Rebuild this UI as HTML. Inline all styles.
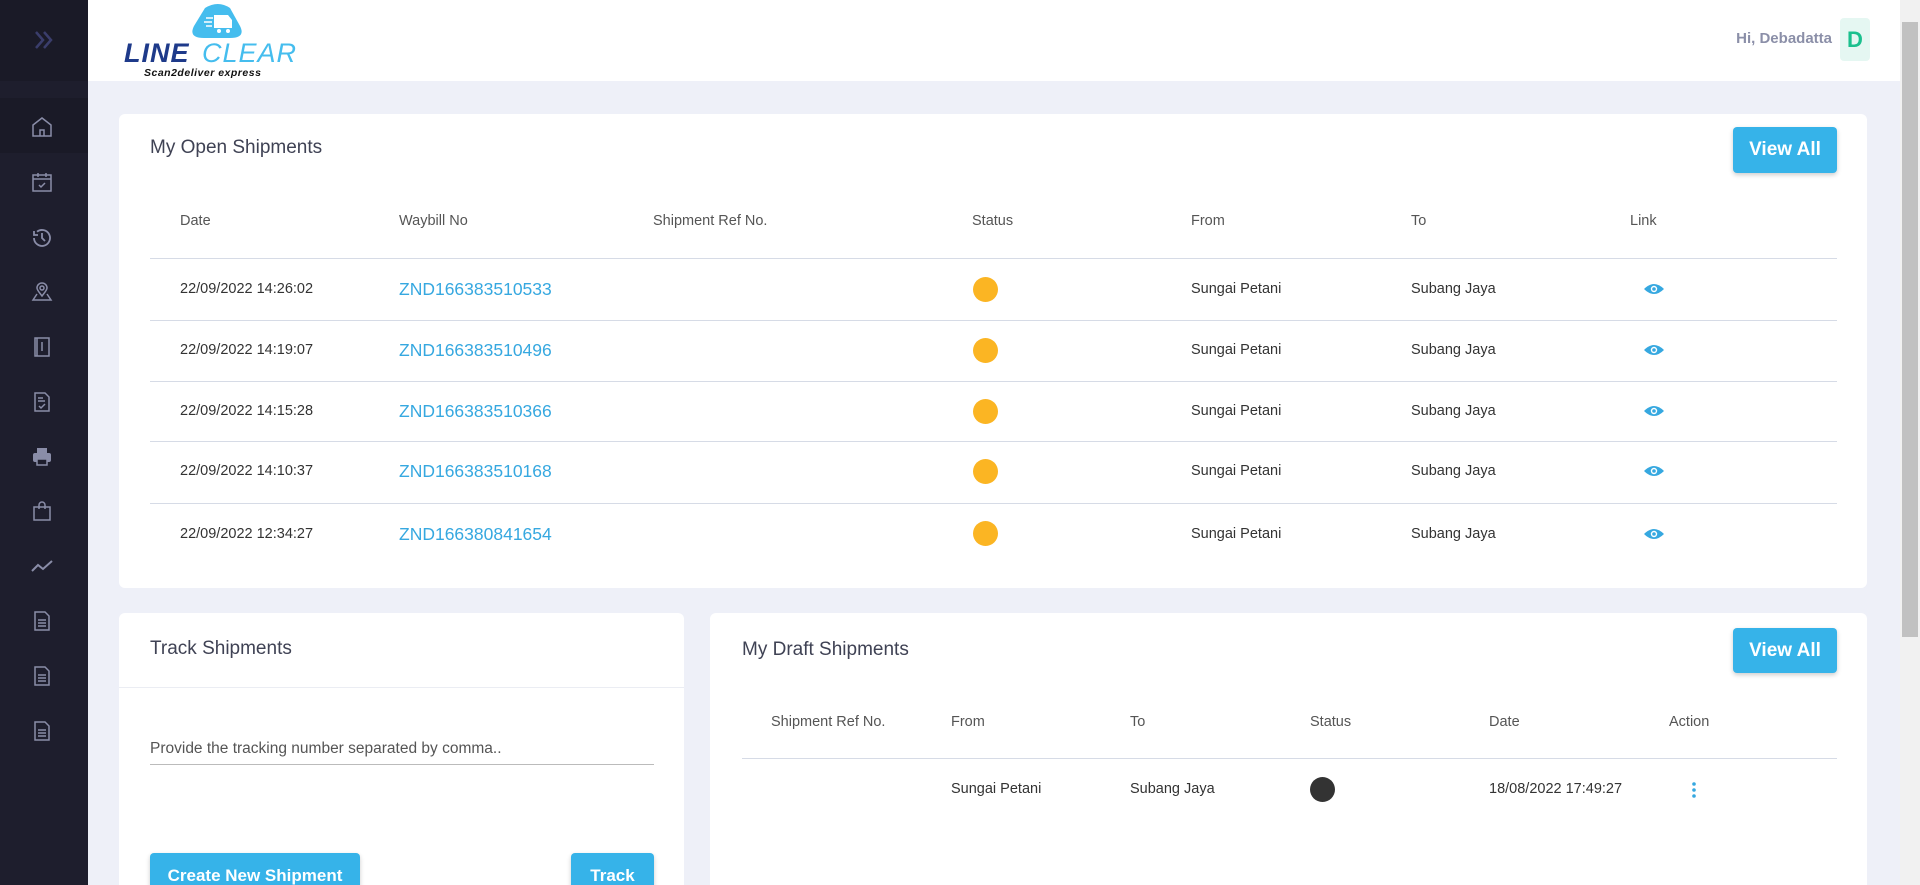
<!DOCTYPE html>
<html><head><meta charset="utf-8"><style>
*{box-sizing:border-box;margin:0;padding:0}
html,body{width:1920px;height:885px;overflow:hidden}
body{background:#eef0f8;font-family:"Liberation Sans",sans-serif;position:relative;color:#3f4254}
.abs{position:absolute}
.sb{left:0;top:0;width:88px;height:885px;background:#1e1e2d}
.sbtop{left:0;top:0;width:88px;height:81px;background:#1a1a27}
.ic{left:30px;width:24px;height:24px}
.hdr{left:88px;top:0;width:1812px;height:81px;background:#fff}
.card{background:#fff;border-radius:6px}
.t{font-size:19px;color:#3f4254}
.btn{background:#36b3e9;color:#fff;font-weight:bold;font-size:19px;border-radius:4px;text-align:center;box-shadow:0 2px 5px rgba(0,0,0,.2)}
.th{font-size:14.5px;color:#555;}
.td{font-size:14.5px;color:#333}
.wb{font-size:17.5px;color:#36a8e0}
.line{height:1px;background:#d6dbe6}
.dot{width:25px;height:25px;border-radius:50%;background:#fbb523}
</style></head><body>
<div class="abs sb"></div>
<div class="abs sbtop"></div>
<div class="abs" style="left:0;top:98px;width:88px;height:55px;background:#1a1a27"></div>
<svg class="abs" style="left:32px;top:28px" width="24" height="24" viewBox="0 0 24 24" fill="none" stroke="#3a3d6b" stroke-width="2.5"><path d="M4 4l7 8-7 8M12 4l7 8-7 8"/></svg>
<svg class="abs ic" style="top:115px" viewBox="0 0 24 24" fill="none" stroke="#8a8da8" stroke-width="1.5"><path d="M3 10l9-7 9 7v11H3z M10 21v-6h4v6"/></svg>
<svg class="abs ic" style="top:170px" viewBox="0 0 24 24" fill="none" stroke="#8a8da8" stroke-width="1.5"><rect x="3" y="5" width="18" height="16"/><path d="M3 9h18M8 3v4M16 3v4M9 15l2 2 4-4"/></svg>
<svg class="abs ic" style="top:226px" viewBox="0 0 24 24" fill="none" stroke="#8a8da8" stroke-width="1.8"><path d="M4 12a8 8 0 1 0 3-6.3M4 5v4h4M12 7v5l3 3"/></svg>
<svg class="abs ic" style="top:279px" viewBox="0 0 24 24" fill="none" stroke="#8a8da8" stroke-width="1.5"><circle cx="12" cy="9" r="2"/><path d="M12 17c-3-4-5-6-5-8a5 5 0 0 1 10 0c0 2-2 4-5 8zM7 15l-4 6h18l-4-6"/></svg>
<svg class="abs ic" style="top:335px" viewBox="0 0 24 24" fill="none" stroke="#8a8da8" stroke-width="1.5"><rect x="5" y="3" width="14" height="18"/><path d="M7 3v18M12 7v9"/></svg>
<svg class="abs ic" style="top:390px" viewBox="0 0 24 24" fill="none" stroke="#8a8da8" stroke-width="1.5"><path d="M5 3h10l4 4v14H5zM8 8h5M8 11h7M9 16l2 2 4-4"/></svg>
<svg class="abs ic" style="top:445px" viewBox="0 0 24 24" fill="#8a8da8"><rect x="7" y="3" width="10" height="5"/><rect x="3" y="8" width="18" height="9" rx="2"/><rect x="7" y="14" width="10" height="6" fill="#1e1e2d" stroke="#8a8da8" stroke-width="1.5"/></svg>
<svg class="abs ic" style="top:499px" viewBox="0 0 24 24" fill="none" stroke="#8a8da8" stroke-width="1.5"><path d="M4 8h16v13H4zM9 10V6a3 3 0 0 1 6 0v4"/></svg>
<svg class="abs ic" style="top:554px" viewBox="0 0 24 24" fill="none" stroke="#8a8da8" stroke-width="2"><path d="M2 17l6-6 5 4 9-8"/></svg>
<svg class="abs ic" style="top:609px" viewBox="0 0 24 24" fill="none" stroke="#8a8da8" stroke-width="1.5"><path d="M5 3h10l4 4v14H5zM8 11h8M8 14h8M8 17h8"/></svg>
<svg class="abs ic" style="top:664px" viewBox="0 0 24 24" fill="none" stroke="#8a8da8" stroke-width="1.5"><path d="M5 3h10l4 4v14H5zM8 11h8M8 14h8M8 17h8"/></svg>
<svg class="abs ic" style="top:719px" viewBox="0 0 24 24" fill="none" stroke="#8a8da8" stroke-width="1.5"><path d="M5 3h10l4 4v14H5zM8 11h8M8 14h8M8 17h8"/></svg>

<div class="abs hdr"></div>
<svg class="abs" style="left:120px;top:2px" width="200" height="78" viewBox="0 0 200 78">
<path d="M85 6 Q98 -2 110 6 L120 24 Q126 36 110 36 L84 36 Q68 36 74 24 Z" fill="#45bdee"/>
<path d="M86 16h7M84 20h8M86 24h6" stroke="#fff" stroke-width="1.5"/>
<path d="M94 13h14l4 5v8H94z" fill="#fff"/><circle cx="99" cy="29" r="2.5" fill="#fff" stroke="#45bdee"/><circle cx="108" cy="29" r="2.5" fill="#fff" stroke="#45bdee"/>
<text x="4" y="60" font-family="Liberation Sans" font-style="italic" font-weight="bold" font-size="27" fill="#1e3a8a" letter-spacing="1">LINE</text>
<text x="82" y="60" font-family="Liberation Sans" font-style="italic" font-size="27" fill="#45bdee" letter-spacing="1">CLEAR</text>
<text x="24" y="74" font-family="Liberation Sans" font-style="italic" font-weight="bold" font-size="10.5" fill="#111" letter-spacing="0.5">Scan2deliver express</text>
</svg>
<div class="abs" style="right:88px;top:30px;font-size:15px;font-weight:bold;color:#8b8fa8">Hi, Debadatta</div>
<div class="abs" style="left:1840px;top:18px;width:30px;height:43px;background:#e5f7f2;border-radius:4px;color:#1bc08e;font-weight:bold;font-size:22px;text-align:center;line-height:43px">D</div>
<div class="abs" style="left:1900px;top:0;width:20px;height:885px;background:#f1f1f1"></div>
<div class="abs" style="left:1902px;top:22px;width:16px;height:615px;background:#c1c1c1"></div>

<div class="abs card" style="left:119px;top:114px;width:1748px;height:474px"></div>
<div class="abs t" style="left:150px;top:137px">My Open Shipments</div>
<div class="abs btn" style="left:1733px;top:127px;width:104px;height:46px;line-height:46px">View All</div>
<div class="abs th" style="left:180px;top:213px">Date</div>
<div class="abs th" style="left:399px;top:213px">Waybill No</div>
<div class="abs th" style="left:653px;top:213px">Shipment Ref No.</div>
<div class="abs th" style="left:972px;top:213px">Status</div>
<div class="abs th" style="left:1191px;top:213px">From</div>
<div class="abs th" style="left:1411px;top:213px">To</div>
<div class="abs th" style="left:1630px;top:213px">Link</div>
<div class="abs line" style="left:150px;top:258px;width:1687px"></div>
<div class="abs line" style="left:150px;top:320px;width:1687px"></div>
<div class="abs line" style="left:150px;top:381px;width:1687px"></div>
<div class="abs line" style="left:150px;top:441px;width:1687px"></div>
<div class="abs line" style="left:150px;top:503px;width:1687px"></div>

<div class="abs td" style="left:180px;top:281px">22/09/2022 14:26:02</div><div class="abs wb" style="left:399px;top:279px">ZND166383510533</div><div class="abs dot" style="left:973px;top:277px"></div><div class="abs td" style="left:1191px;top:281px">Sungai Petani</div><div class="abs td" style="left:1411px;top:281px">Subang Jaya</div>
<div class="abs td" style="left:180px;top:342px">22/09/2022 14:19:07</div><div class="abs wb" style="left:399px;top:340px">ZND166383510496</div><div class="abs dot" style="left:973px;top:338px"></div><div class="abs td" style="left:1191px;top:342px">Sungai Petani</div><div class="abs td" style="left:1411px;top:342px">Subang Jaya</div>
<div class="abs td" style="left:180px;top:403px">22/09/2022 14:15:28</div><div class="abs wb" style="left:399px;top:401px">ZND166383510366</div><div class="abs dot" style="left:973px;top:399px"></div><div class="abs td" style="left:1191px;top:403px">Sungai Petani</div><div class="abs td" style="left:1411px;top:403px">Subang Jaya</div>
<div class="abs td" style="left:180px;top:463px">22/09/2022 14:10:37</div><div class="abs wb" style="left:399px;top:461px">ZND166383510168</div><div class="abs dot" style="left:973px;top:459px"></div><div class="abs td" style="left:1191px;top:463px">Sungai Petani</div><div class="abs td" style="left:1411px;top:463px">Subang Jaya</div>
<div class="abs td" style="left:180px;top:526px">22/09/2022 12:34:27</div><div class="abs wb" style="left:399px;top:524px">ZND166380841654</div><div class="abs dot" style="left:973px;top:521px"></div><div class="abs td" style="left:1191px;top:526px">Sungai Petani</div><div class="abs td" style="left:1411px;top:526px">Subang Jaya</div>
<svg class="abs" style="left:1643px;top:282px" width="22" height="14" viewBox="0 0 22 14"><path d="M1 7Q11 -3 21 7Q11 17 1 7z" fill="#36a8e0"/><circle cx="11" cy="7" r="3.2" fill="#fff"/><circle cx="11" cy="7" r="1.8" fill="#36a8e0"/></svg>
<svg class="abs" style="left:1643px;top:343px" width="22" height="14" viewBox="0 0 22 14"><path d="M1 7Q11 -3 21 7Q11 17 1 7z" fill="#36a8e0"/><circle cx="11" cy="7" r="3.2" fill="#fff"/><circle cx="11" cy="7" r="1.8" fill="#36a8e0"/></svg>
<svg class="abs" style="left:1643px;top:404px" width="22" height="14" viewBox="0 0 22 14"><path d="M1 7Q11 -3 21 7Q11 17 1 7z" fill="#36a8e0"/><circle cx="11" cy="7" r="3.2" fill="#fff"/><circle cx="11" cy="7" r="1.8" fill="#36a8e0"/></svg>
<svg class="abs" style="left:1643px;top:464px" width="22" height="14" viewBox="0 0 22 14"><path d="M1 7Q11 -3 21 7Q11 17 1 7z" fill="#36a8e0"/><circle cx="11" cy="7" r="3.2" fill="#fff"/><circle cx="11" cy="7" r="1.8" fill="#36a8e0"/></svg>
<svg class="abs" style="left:1643px;top:527px" width="22" height="14" viewBox="0 0 22 14"><path d="M1 7Q11 -3 21 7Q11 17 1 7z" fill="#36a8e0"/><circle cx="11" cy="7" r="3.2" fill="#fff"/><circle cx="11" cy="7" r="1.8" fill="#36a8e0"/></svg>

<div class="abs card" style="left:119px;top:613px;width:565px;height:272px;border-radius:6px 6px 0 0"></div>
<div class="abs t" style="left:150px;top:638px">Track Shipments</div>
<div class="abs line" style="left:119px;top:687px;width:565px;background:#ebedf3"></div>
<div class="abs" style="left:150px;top:740px;font-size:15.5px;color:#555">Provide the tracking number separated by comma..</div>
<div class="abs line" style="left:150px;top:764px;width:504px;background:#bbb"></div>
<div class="abs btn" style="left:150px;top:853px;width:210px;height:46px;line-height:46px;font-size:17px">Create New Shipment</div>
<div class="abs btn" style="left:571px;top:853px;width:83px;height:46px;line-height:46px;font-size:17px">Track</div>

<div class="abs card" style="left:710px;top:613px;width:1157px;height:272px;border-radius:6px 6px 0 0"></div>
<div class="abs t" style="left:742px;top:639px">My Draft Shipments</div>
<div class="abs btn" style="left:1733px;top:628px;width:104px;height:45px;line-height:45px">View All</div>
<div class="abs th" style="left:771px;top:714px">Shipment Ref No.</div>
<div class="abs th" style="left:951px;top:714px">From</div>
<div class="abs th" style="left:1130px;top:714px">To</div>
<div class="abs th" style="left:1310px;top:714px">Status</div>
<div class="abs th" style="left:1489px;top:714px">Date</div>
<div class="abs th" style="left:1669px;top:714px">Action</div>
<div class="abs line" style="left:742px;top:758px;width:1095px"></div>
<div class="abs td" style="left:951px;top:781px">Sungai Petani</div>
<div class="abs td" style="left:1130px;top:781px">Subang Jaya</div>
<div class="abs dot" style="left:1310px;top:777px;background:#333"></div>
<div class="abs td" style="left:1489px;top:781px">18/08/2022 17:49:27</div>
<svg class="abs" style="left:1691px;top:781px" width="6" height="18"><circle cx="3" cy="3" r="1.8" fill="#36a8e0"/><circle cx="3" cy="9" r="1.8" fill="#36a8e0"/><circle cx="3" cy="15" r="1.8" fill="#36a8e0"/></svg>
</body></html>
